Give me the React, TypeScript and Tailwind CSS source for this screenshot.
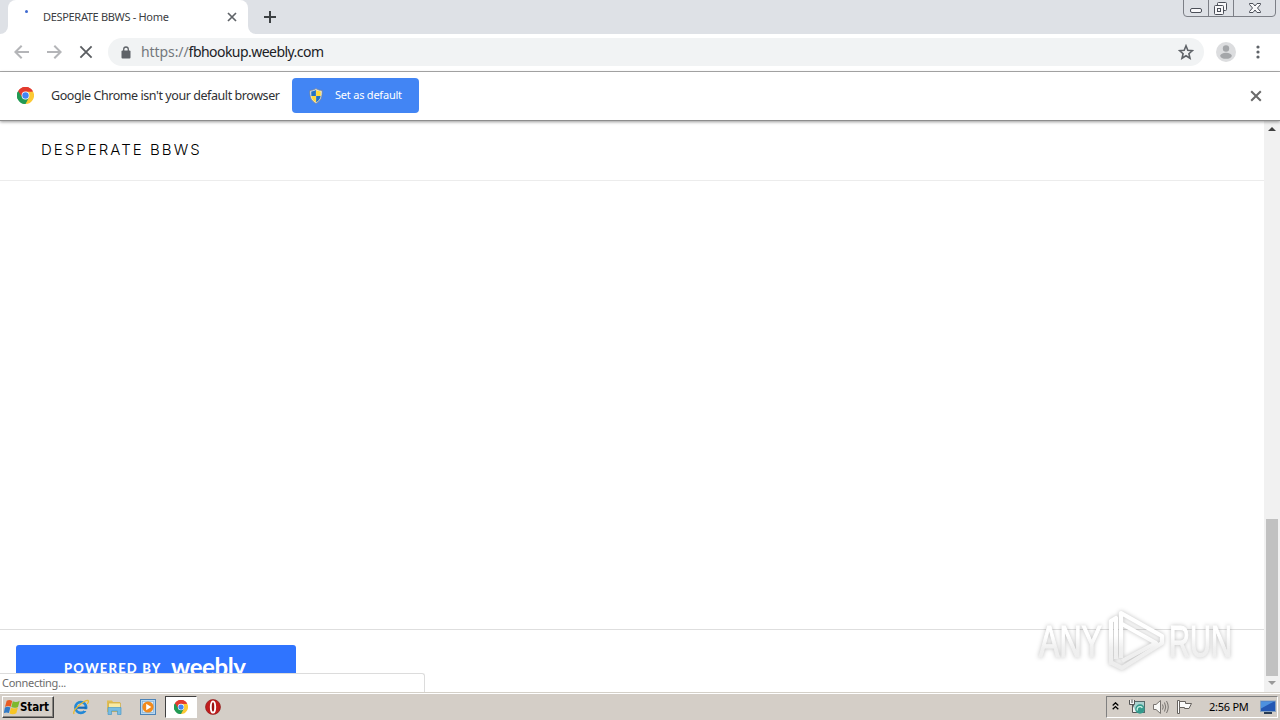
import type { ReactNode } from "react"

const ChromeLogo = ({ className }: { className?: string }) => (
  <svg viewBox="0 0 48 48" className={className}>
    <path d="M24 24 3.2 12A24 24 0 0 1 44.8 12Z" fill="#e33b2e" />
    <path d="M24 24V48A24 24 0 0 1 3.2 12Z" fill="#229a54" />
    <path d="M24 24 44.8 12A24 24 0 0 1 24 48Z" fill="#fcc934" />
    <path d="M24 13H44.8L34 30Z" fill="#fcc934" />
    <path d="M3.2 12A24 24 0 0 1 44.8 12L45.2 13H24L14 29Z" fill="#e33b2e" />
    <path d="M14.5 29.5 3.2 12A24 24 0 0 0 24 48L33.5 30Z" fill="#229a54" />
    <circle cx="24" cy="24" r="11" fill="#fff" />
    <circle cx="24" cy="24" r="9" fill="#4285f4" />
  </svg>
)

const CloseIcon = ({ className }: { className?: string }) => (
  <svg viewBox="0 0 10 10" className={className} stroke="currentColor" strokeWidth="1.7" fill="none">
    <path d="M1 1 9 9M9 1 1 9" />
  </svg>
)

const ArrowIcon = () => (
  <svg viewBox="0 0 16 16" className="h-4 w-4 text-[#b4b5b8]" stroke="currentColor" strokeWidth="2" fill="none">
    <path d="M1 8H14.5M8.3 1.7 14.6 8 8.3 14.3" />
  </svg>
)

const ShieldIcon = () => (
  <svg viewBox="0 0 14 16" className="h-[16px] w-[14px]">
    <path d="M7 .6C5.2 2 3 2.4.9 2.4.5 8.5 2 13 7 15.4 12 13 13.5 8.5 13.1 2.4 11 2.4 8.8 2 7 .6Z" fill="#e8edf3" stroke="#7b8288" strokeWidth=".8" />
    <path d="M6.9 2.1C5.5 3 4 3.5 2.2 3.5L2.3 8H6.9Z" fill="#2472c4" />
    <path d="M7.1 2.1C8.5 3 10 3.5 11.8 3.5L11.7 8H7.1Z" fill="#ffd93b" />
    <path d="M6.9 8H2.3C2.7 11 4.3 13 6.9 14.2Z" fill="#ffd93b" />
    <path d="M7.1 8H11.7C11.3 11 9.7 13 7.1 14.2Z" fill="#2472c4" />
  </svg>
)

const WindowControls = () => (
  <svg viewBox="0 0 94 18" className="h-[18px] w-[94px]" fill="none" stroke="#7c7f86">
    <path d="M.5 0V13Q.5 16.5 4 16.5H89Q92.5 16.5 92.5 13V0M25.5 0V16.5M50.5 0V16.5" />
    <g stroke="#4b4f58">
      <rect x="7.5" y="8.5" width="11" height="4" rx="1.5" fill="#f8f8fa" />
      <rect x="34.5" y="2.5" width="9" height="8" rx="1" fill="#f8f8fa" />
      <rect x="31.5" y="5.5" width="9" height="9" rx="1" fill="#f8f8fa" />
      <rect x="34.5" y="8.5" width="3" height="3" />
      <path d="M66.5 3.5H70L72 6 74 3.5H77.5V4.5L74.5 8 77.5 11.5V12.5H74L72 10 70 12.5H66.5V11.5L69.5 8 66.5 4.5Z" fill="#f8f8fa" />
    </g>
  </svg>
)

const TabStrip = () => (
  <div className="flex h-[34px] justify-between bg-[#dee1e6]">
    <div className="flex">
      <div className="w-2 bg-white">
        <div className="h-full rounded-br-[8px] bg-[#dee1e6]" />
      </div>
      <div className="flex w-[240px] items-center rounded-t-[8px] bg-white pr-[11px]">
        <div className="ml-[16.5px] mr-[15.5px] h-[3px] w-[3px] -translate-y-[6px] rounded-full bg-[#3f6ad0]" />
        <span className="flex-1 whitespace-nowrap font-['Noto_Sans',sans-serif] text-[11px] tracking-[-0.32px] text-[#3c4043]">
          DESPERATE BBWS - Home
        </span>
        <CloseIcon className="h-[10px] w-[10px] text-[#5f6368]" />
      </div>
      <div className="w-2 bg-white">
        <div className="h-full rounded-bl-[8px] bg-[#dee1e6]" />
      </div>
      <svg viewBox="0 0 12 12" className="ml-2 mt-[11px] h-3 w-3" stroke="#3c4043" strokeWidth="2">
        <path d="M6 0V12M0 6H12" />
      </svg>
    </div>
    <div className="mr-[3px]">
      <WindowControls />
    </div>
  </div>
)

const Toolbar = () => (
  <div className="flex h-[38px] items-center border-b border-[#adadad] bg-white px-[14px] pb-px">
    <div className="rotate-180">
      <ArrowIcon />
    </div>
    <div className="ml-4">
      <ArrowIcon />
    </div>
    <CloseIcon className="ml-[17px] h-[14px] w-[14px] text-[#5a5d61] [stroke-width:1.3]" />
    <div className="ml-[15px] flex h-7 w-[1096px] items-center rounded-full bg-[#f1f3f4] pl-[13px] pr-[10px]">
      <svg viewBox="0 0 10 13" className="h-[13px] w-[10px]">
        <rect x=".5" y="4.5" width="9" height="8" rx="1" fill="#5f6368" />
        <path d="M2.7 5V3.3a2.3 2.3 0 0 1 4.6 0V5" fill="none" stroke="#5f6368" strokeWidth="1.3" />
      </svg>
      <span className="ml-[10px] flex-1 whitespace-nowrap pb-px font-['Noto_Sans',sans-serif] text-[14px] tracking-[-0.54px] text-[#202124]">
        <span className="tracking-[-0.08px] text-[#74787d]">https://</span>fbhookup.weebly.com
      </span>
      <svg viewBox="0 0 16 16" className="h-4 w-4" fill="none" stroke="#5f6368" strokeWidth="1.6">
        <path d="M8 1.8 9.8 6.2 14.5 6.6 10.9 9.7 12 14.3 8 11.8 4 14.3 5.1 9.7 1.5 6.6 6.2 6.2Z" />
      </svg>
    </div>
    <svg viewBox="0 0 20 20" className="ml-3 h-5 w-5">
      <circle cx="10" cy="10" r="10" fill="#dcdddf" />
      <circle cx="10" cy="6.5" r="3.2" fill="#a4a6a9" />
      <ellipse cx="10" cy="13.8" rx="5.8" ry="3" fill="#a4a6a9" />
    </svg>
    <svg viewBox="0 0 4 14" className="ml-5 h-[14px] w-1" fill="#5f6368">
      <circle cx="2" cy="2" r="1.6" />
      <circle cx="2" cy="7" r="1.6" />
      <circle cx="2" cy="12" r="1.6" />
    </svg>
  </div>
)

const InfoBar = () => (
  <div className="relative z-10 flex h-[49px] items-center border-b border-[#8d8d8d] bg-white pl-[17px] pr-[18px] pb-px shadow-[0_1px_3px_rgba(0,0,0,0.4)]">
    <ChromeLogo className="h-[17px] w-[17px]" />
    <span className="ml-[17px] w-[241px] whitespace-nowrap pt-[2px] font-['Noto_Sans',sans-serif] text-[12.5px] tracking-[-0.43px] text-[#303134]">
      Google Chrome isn't your default browser
    </span>
    <button className="flex h-[35px] w-[127px] items-center rounded-[4px] bg-[#4285f4] pl-[17px] font-['Noto_Sans',sans-serif] text-[11px] tracking-[-0.22px] text-white">
      <ShieldIcon />
      <span className="ml-3 whitespace-nowrap">Set as default</span>
    </button>
    <CloseIcon className="ml-auto h-[12px] w-[12px] text-[#6a6a6a]" />
  </div>
)

const Watermark = () => (
  <div className="absolute left-[1030px] top-[482px]">
    <svg viewBox="0 0 212 76" className="h-[76px] w-[212px] overflow-visible [filter:drop-shadow(0_0_2px_rgba(0,0,0,0.25))]">
      <defs>
        <linearGradient id="fade" x1="0" y1="8" x2="0" y2="70" gradientUnits="userSpaceOnUse">
          <stop offset="0.4" stopColor="#ffffff" />
          <stop offset="0.6" stopColor="#f0f0f0" />
          <stop offset="1" stopColor="#ececec" />
        </linearGradient>
      </defs>
      <g fill="url(#fade)" stroke="url(#fade)" strokeWidth="1.2" fontFamily="Liberation Sans, sans-serif" fontSize="45">
        <text x="9" y="54" textLength="63" lengthAdjust="spacingAndGlyphs">
          ANY
        </text>
        <text x="139" y="54" textLength="63" lengthAdjust="spacingAndGlyphs">
          RUN
        </text>
      </g>
      <g fill="none" stroke="url(#fade)" strokeWidth="4.2" strokeLinejoin="round">
        <path d="M81 62V18L86 15V56" />
        <path d="M91 55V10L132 33V40L92 65 82 60" />
        <path d="M92 21 126 40 92 58" />
      </g>
    </svg>
  </div>
)

const Page = () => (
  <div className="relative flex h-[571px] bg-white">
    <div className="flex flex-1 flex-col overflow-hidden">
      <div className="flex h-[60px] items-center border-b border-[#ececec] pl-[41px]">
        <span className="whitespace-nowrap font-['Inter',sans-serif] text-[15px] font-light tracking-[2.05px] text-black">DESPERATE BBWS</span>
      </div>
      <div className="h-[449px] border-b border-[#dedede]" />
      <div className="pl-4 pt-[15px]">
        <div className="flex h-[46px] w-[280px] items-center rounded-[3px] bg-[#2f74ff] pl-12 text-white">
          <span className="w-[107px] whitespace-nowrap pt-px font-['Lato',sans-serif] text-[13px] font-black tracking-[1.2px]">POWERED BY</span>
          <span className="-translate-y-[1px] whitespace-nowrap font-['Lato',sans-serif] text-[24px] font-bold leading-none tracking-[-0.4px]">weebly</span>
        </div>
      </div>
    </div>
    <div className="flex w-4 flex-col items-center bg-[#f1f1f1]">
      <svg viewBox="0 0 8 4" className="mt-[6px] h-1 w-2">
        <path d="M0 4 4 0 8 4Z" fill="#404040" />
      </svg>
      <div className="mt-[388px] h-[157px] w-3 bg-[#c1c1c1]" />
      <svg viewBox="0 0 8 4" className="mt-[5px] h-1 w-2">
        <path d="M0 0 4 4 8 0Z" fill="#9a9a9a" />
      </svg>
    </div>
    {/* Status bubble */}
    <div className="absolute bottom-0 left-0 flex h-[19px] w-[425px] items-center rounded-tr-[3px] border-r border-t border-[#dcdcdc] bg-white pl-[2px] font-['Noto_Sans',sans-serif] text-[11px] tracking-[-0.3px] text-[#6c6c6c]">
      Connecting...
    </div>
    <Watermark />
  </div>
)

const TaskIcon = ({ children }: { children: ReactNode }) => (
  <div className="flex h-[22px] w-[33.5px] items-center justify-center">{children}</div>
)

const Taskbar = () => (
  <div className="flex h-[28px] items-center border-t border-[#d4d0c8] bg-[#d4cec7] shadow-[inset_0_1px_0_#ffffff]">
    <div className="ml-[2px] mt-[1px] flex h-[22px] w-[52px] items-center border border-b-[#404040] border-l-white border-r-[#404040] border-t-white pl-px shadow-[inset_-1px_-1px_0_#888580]">
      <svg viewBox="0 0 16 16" className="h-4 w-4 shrink-0">
        <path d="M2.7 1.7Q5.5 .2 8.2 1.9L6.7 7.7Q4 6.4 1 7.9Z" fill="#e85c24" />
        <path d="M8.8 2.2Q12 4 15.7 1.8L14 7.9Q10.5 9.7 7.3 8Z" fill="#7db92d" />
        <path d="M.9 8.6Q3.6 7 6.4 8.4L4.9 14Q2.3 12.8-.2 14.2Z" fill="#327ac6" />
        <path d="M7 8.8Q10.2 10.4 13.9 8.5L12.3 14.2Q9 16 5.5 14.4Z" fill="#f7c524" />
      </svg>
      <span className="pt-px font-['DejaVu_Sans_Condensed','DejaVu_Sans',sans-serif] text-[11.5px] font-bold tracking-[-0.1px] text-black">Start</span>
    </div>
    <div className="ml-[10px] mt-px flex">
      <TaskIcon>
        <svg viewBox="0 0 16 16" className="h-4 w-4" fill="none">
          <circle cx="7.8" cy="8.5" r="5.3" stroke="#2388d6" strokeWidth="2.8" />
          <path d="M4 8.7H13.5" stroke="#176cb8" strokeWidth="2.2" />
          <path d="M11 10.2H15V12H11Z" fill="#d4cec7" />
          <path d="M1 15Q-.5 12 6 6.5T15 1.5Q16 2.5 14.3 5" stroke="#e7b92f" strokeWidth="1.3" />
        </svg>
      </TaskIcon>
      <TaskIcon>
        <svg viewBox="0 0 16 16" className="h-4 w-4">
          <path d="M1 1.5H6L7 3H14V13H1Z" fill="#e0bd55" />
          <path d="M2.5 4H14.5V12H2.5Z" fill="#f8eaa3" stroke="#cba944" strokeWidth=".7" />
          <path d="M2 8.5H15V15.5H11.5V12H5.5V15.5H2Z" fill="#77bce1" stroke="#4d99c5" strokeWidth=".7" />
        </svg>
      </TaskIcon>
      <TaskIcon>
        <svg viewBox="0 0 16 16" className="h-4 w-4">
          <rect x=".5" y=".5" width="15" height="15" fill="#b9d7ef" stroke="#4b83b8" />
          <rect x="2.5" y="2.5" width="11" height="11" fill="#dcebf7" stroke="#78a8d0" strokeWidth=".6" />
          <circle cx="8" cy="8" r="5.6" fill="#f28a1c" />
          <path d="M6.2 4.7V11.3L11.3 8Z" fill="#fff" />
        </svg>
      </TaskIcon>
      <div className="flex h-[22px] w-8 items-center justify-center border border-b-white border-l-[#404040] border-r-white border-t-[#404040] bg-white">
        <ChromeLogo className="h-[14px] w-[14px]" />
      </div>
      <TaskIcon>
        <svg viewBox="0 0 16 16" className="h-4 w-4">
          <circle cx="8" cy="8" r="7.5" fill="#c01d1d" stroke="#851212" strokeWidth=".6" />
          <ellipse cx="8" cy="8" rx="2.2" ry="5.6" fill="#9c1111" stroke="#fff" strokeWidth="1.9" />
        </svg>
      </TaskIcon>
    </div>
    <div className="ml-auto mr-[2px] mt-px flex h-[22px] w-[172px] items-center border border-b-white border-l-[#808080] border-r-white border-t-[#808080] pl-[5px]">
      <svg viewBox="0 0 7 8" className="mb-[3px] h-[8px] w-[7px]" fill="none" stroke="#000" strokeWidth="1.3">
        <path d="M.7 3.5 3.5 .8 6.3 3.5M.7 7.3 3.5 4.6 6.3 7.3" />
      </svg>
      <svg viewBox="0 0 16 16" className="ml-[10px] h-4 w-4">
        <rect x="4.5" y="2.5" width="11" height="11" fill="#a9d3d0" stroke="#56696a" />
        <path d="M.5 1V5.5H5.5V1M3 .5V4M3.5 5.5V13.5H7" fill="#f4f4f4" stroke="#555" />
        <circle cx="11" cy="10" r="4.7" fill="#349a8c" />
        <path d="M8.5 11.5A2.7 2.7 0 0 1 13.3 9" fill="none" stroke="#c9f2e5" strokeWidth="1.3" />
      </svg>
      <svg viewBox="0 0 17 16" className="ml-[7px] h-4 w-[17px]" fill="none" stroke="#77736f">
        <path d="M1.5 5.5H4L8.5 1.5V14.5L4 10.5H1.5Z" fill="#f8f8f6" />
        <path d="M10.5 5.5Q12 8 10.5 10.5M12.5 3.5Q15 8 12.5 12.5M14.5 2Q18 8 14.5 14" />
      </svg>
      <svg viewBox="0 0 16 16" className="ml-[7px] h-4 w-4" stroke="#66625e">
        <path d="M1.5 1.5H3.5V14.5H1.5Z" fill="#fff" />
        <path d="M3.5 2.5H9.5V4.5H15.5L13 9.5H8.5V8.5H3.5Z" fill="#fafafa" />
      </svg>
      <span className="ml-[17px] whitespace-nowrap font-['Noto_Sans',sans-serif] text-[11px] tracking-[-0.25px] text-black">2:56 PM</span>
      <svg viewBox="0 0 16 14" className="ml-auto mr-[1px] h-[14px] w-4">
        <rect x=".5" y="1" width="15" height="10.5" fill="#2458b4" stroke="#87a2bf" />
        <path d="M1 1.5H14L1 8.5Z" fill="#4d91df" />
        <path d="M4 13H12" stroke="#293b53" strokeWidth="2" />
      </svg>
    </div>
  </div>
)

const App = () => {
  return (
    <div className="flex h-[720px] w-[1280px] flex-col overflow-hidden bg-white">
      <TabStrip />
      <Toolbar />
      <InfoBar />
      <Page />
      <Taskbar />
    </div>
  )
}

export default App
